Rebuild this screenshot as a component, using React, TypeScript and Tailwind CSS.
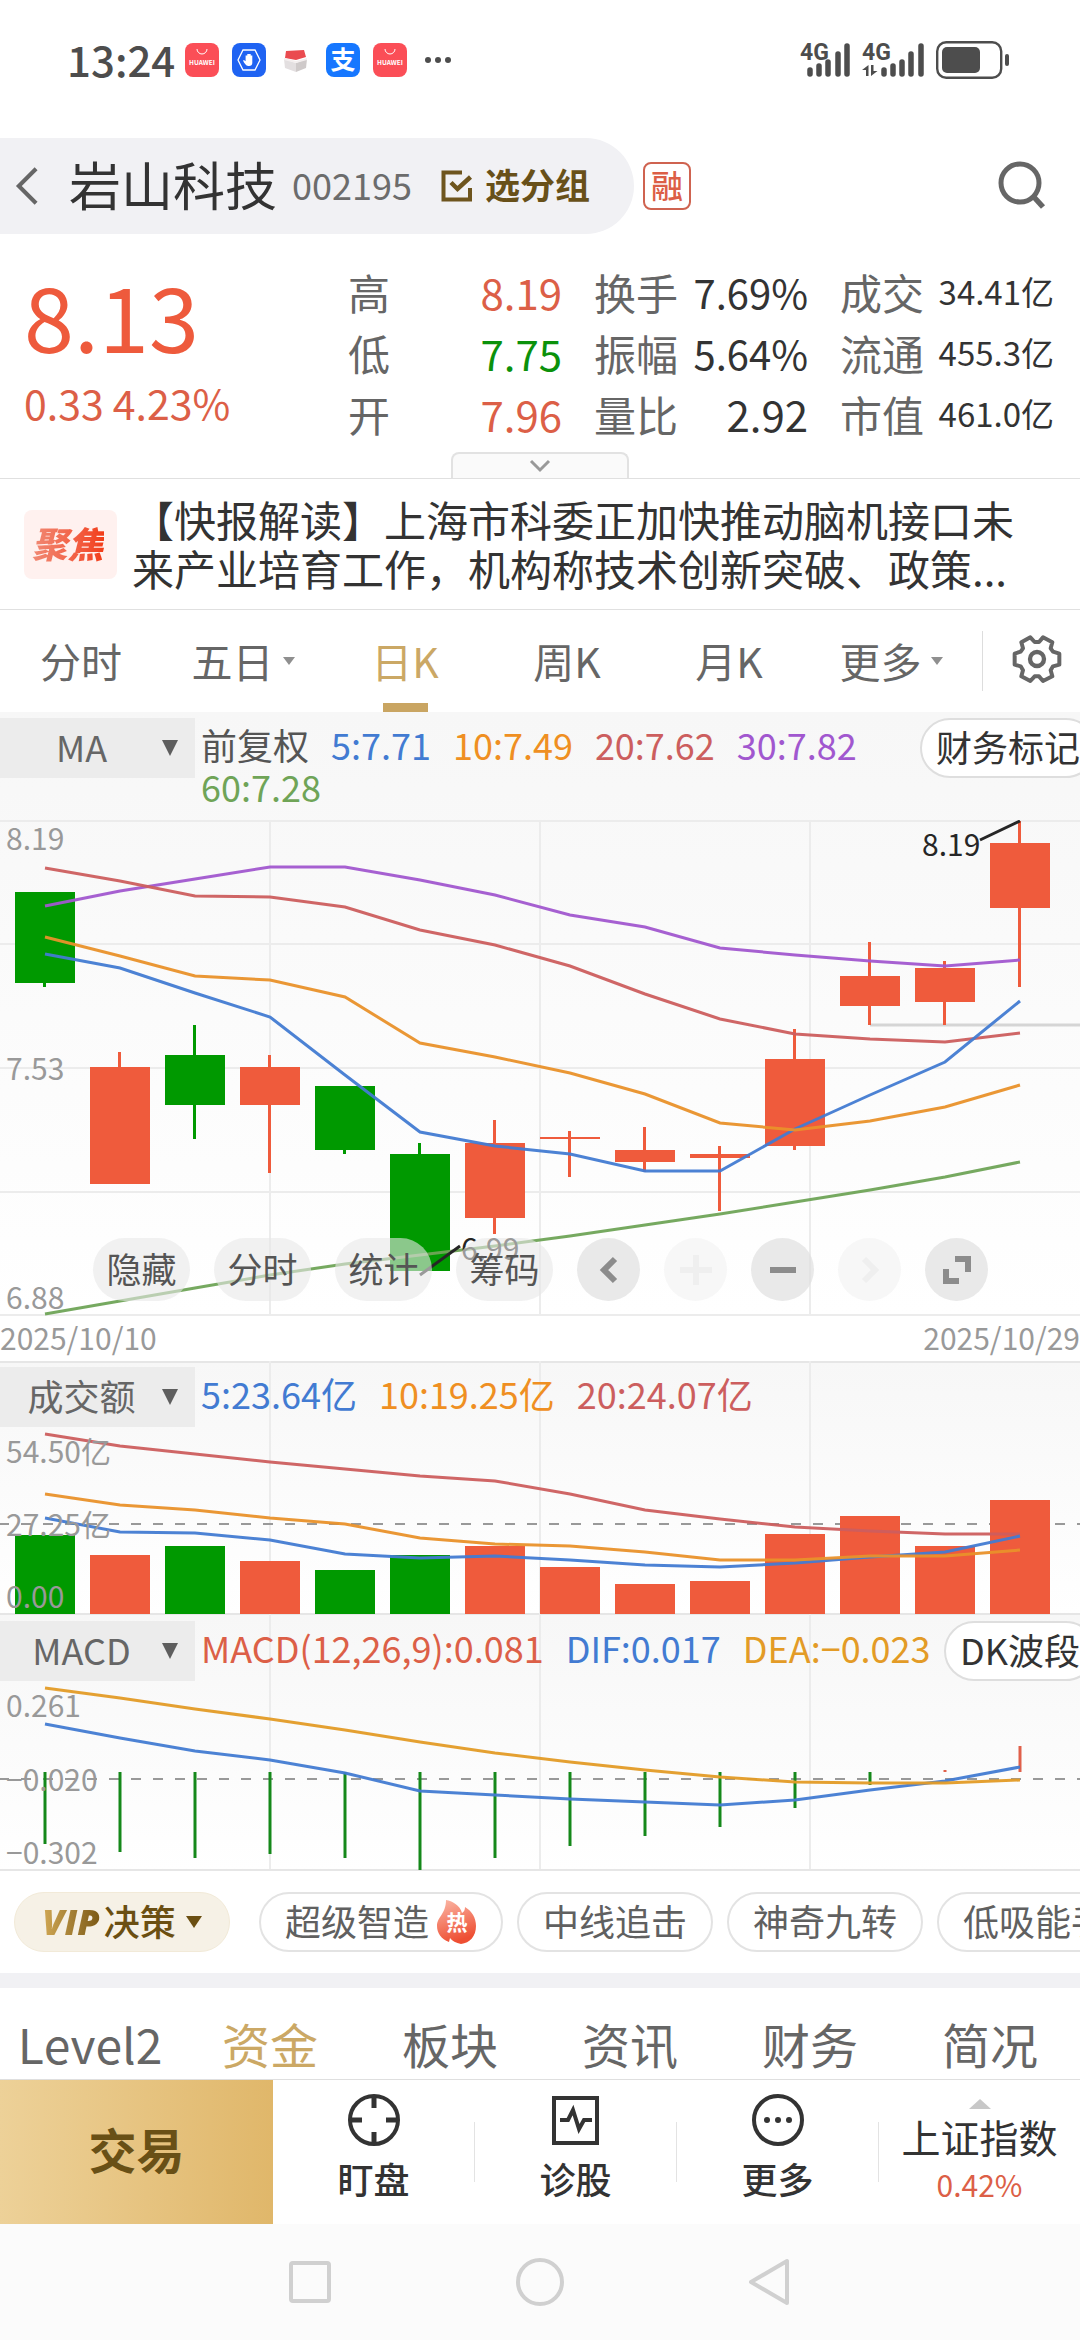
import { ReactNode } from "react";

const RED = "#ef5b3c";
const GREEN = "#009900";

const stats = [
  { label: "高", value: "8.19", style: "text-[#dc5f47] text-[42px]" },
  { label: "换手", value: "7.69%", style: "text-[#333333] text-[40px]" },
  { label: "成交", value: "34.41亿", style: "text-[#333333] text-[33px]" },
  { label: "低", value: "7.75", style: "text-[#0b910b] text-[42px]" },
  { label: "振幅", value: "5.64%", style: "text-[#333333] text-[40px]" },
  { label: "流通", value: "455.3亿", style: "text-[#333333] text-[33px]" },
  { label: "开", value: "7.96", style: "text-[#dc5f47] text-[42px]" },
  { label: "量比", value: "2.92", style: "text-[#333333] text-[42px]" },
  { label: "市值", value: "461.0亿", style: "text-[#333333] text-[33px]" },
];

// high, body top, body bottom, low, up
const candles: [number, number, number, number, boolean][] = [
  [72, 72, 163, 167, false],
  [232, 247, 364, 364, true],
  [205, 235, 285, 319, false],
  [235, 247, 285, 353, true],
  [266, 266, 330, 334, false],
  [323, 334, 451, 451, false],
  [300, 323, 398, 414, true],
  [311, 317, 319, 357, true],
  [307, 330, 342, 352, true],
  [326, 334, 338, 391, true],
  [209, 239, 326, 330, true],
  [122, 156, 186, 205, true],
  [141, 148, 182, 205, true],
  [1, 23, 88, 167, true],
];

const priceLines = [
  { color: "#6fa457", points: [494, 481, 468, 455, 444, 435, 426, 416, 405, 394, 382, 370, 357, 342] },
  { color: "#a157cf", points: [86, 71, 59, 47, 47, 60, 75, 95, 107, 128, 135, 141, 146, 140] },
  { color: "#cc5e5e", points: [48, 61, 76, 77, 87, 110, 125, 146, 174, 199, 214, 219, 222, 213] },
  { color: "#427bd2", points: [134, 148, 173, 197, 255, 312, 326, 334, 351, 351, 309, 275, 242, 181] },
  { color: "#e9912a", points: [117, 136, 156, 160, 177, 223, 237, 253, 274, 303, 310, 301, 287, 265] },
];

const volumes = [174, 194, 185, 200, 209, 194, 185, 206, 223, 220, 173, 155, 185, 139];

const volumeLines = [
  { color: "#cc5e5e", points: [73, 85, 93, 101, 108, 115, 120, 133, 149, 158, 166, 170, 173, 173] },
  { color: "#427bd2", points: [157, 171, 172, 179, 193, 197, 195, 199, 204, 206, 202, 196, 191, 175] },
  { color: "#e9912a", points: [133, 144, 149, 157, 163, 177, 183, 185, 191, 199, 199, 195, 195, 189] },
];

const macdBars = [229, 237, 243, 239, 243, 255, 243, 231, 221, 212, 193, 170, 155, 131];

const macdLines = [
  { color: "#427bd2", points: [109, 123, 136, 145, 158, 176, 180, 184, 187, 190, 185, 175, 166, 152] },
  { color: "#e39b26", points: [73, 83, 94, 104, 115, 127, 138, 147, 155, 162, 167, 168, 168, 165] },
];

const xAt = (i: number) => 45 + i * 75;

function Lines({ lines }: { lines: { color: string; points: number[] }[] }) {
  return (
    <g fill="none" strokeWidth="3" strokeOpacity="0.95">
      {lines.map((l, n) => (
        <polyline key={n} stroke={l.color} points={l.points.map((y, i) => `${xAt(i)},${y}`).join(" ")} />
      ))}
    </g>
  );
}

function AxisLabels({ items }: { items: [string, number][] }) {
  return (
    <g fill="#999999" fontSize="30">
      {items.map(([text, y]) => (
        <text key={text} x="6" y={y}>{text}</text>
      ))}
    </g>
  );
}

function Columns({ height }: { height: number }) {
  return <path d={`M270 0V${height}M540 0V${height}M810 0V${height}`} stroke="#ececec" strokeWidth="2" />;
}

function PriceChart() {
  return (
    <svg viewBox="0 0 1080 496" className="w-full [grid-area:1/1]">
      <path d="M0 1H1080M0 124H1080M0 248H1080M0 372H1080M0 495H1080" stroke="#ececec" strokeWidth="2" />
      <Columns height={496} />
      <path d="M870 205H1080" stroke="#d5d5d5" strokeWidth="3" />
      {candles.map(([high, top, bottom, low, up], i) => (
        <g key={i} fill={up ? RED : GREEN}>
          <rect x={xAt(i) - 2} y={high} width="3" height={low - high} />
          <rect x={xAt(i) - 30} y={top} width="60" height={bottom - top} />
        </g>
      ))}
      <Lines lines={priceLines} />
      <AxisLabels items={[["8.19", 30], ["7.53", 260], ["6.88", 489]]} />
      <path d="M980 20L1020 1M420 455L460 426" stroke="#262626" strokeWidth="3" />
      <g fill="#262626" fontSize="30">
        <text x="922" y="36">8.19</text>
        <text x="461" y="440">6.99</text>
      </g>
    </svg>
  );
}

function VolumeChart() {
  return (
    <svg viewBox="0 0 1080 254" className="w-full [grid-area:1/1]">
      <path d="M0 1H1080M0 253H1080" stroke="#e6e6e6" strokeWidth="2" />
      <Columns height={254} />
      <path d="M-1 163H1080" stroke="#999999" strokeWidth="2" strokeDasharray="10 12" />
      {volumes.map((y, i) => (
        <rect key={i} x={xAt(i) - 30} y={y} width="60" height={253 - y} fill={candles[i][4] ? RED : GREEN} />
      ))}
      <Lines lines={volumeLines} />
      <AxisLabels items={[["54.50亿", 102], ["27.25亿", 175], ["0.00", 247]]} />
    </svg>
  );
}

function MacdChart() {
  return (
    <svg viewBox="0 0 1080 256" className="w-full [grid-area:1/1]">
      <Columns height={256} />
      <path d="M0 255H1080" stroke="#e6e6e6" strokeWidth="2" />
      <path d="M-1 164H1080" stroke="#999999" strokeWidth="2" strokeDasharray="10 12" />
      {macdBars.map((y, i) => (
        <path key={i} d={`M${xAt(i)} 157V${y}`} stroke={y < 157 ? "#e0604a" : "#15881a"} strokeWidth="3" />
      ))}
      <Lines lines={macdLines} />
      <AxisLabels items={[["0.261", 102], ["−0.020", 176], ["−0.302", 249]]} />
    </svg>
  );
}

function IndicatorSelect({ label, options }: { label: string; options: string[] }) {
  return (
    <div className="relative w-[195px] shrink-0">
      <select aria-label={label} className="w-full h-[60px] pr-8 pb-1 appearance-none bg-[#ececec] text-center text-[#666666]">
        {options.map((o) => (
          <option key={o}>{o}</option>
        ))}
      </select>
      <svg viewBox="0 0 16 16" className="absolute right-[17px] top-[22px] w-4 h-4 pointer-events-none">
        <path d="M0 0H16L8 16Z" fill="#5e5e5e" />
      </svg>
    </div>
  );
}

function IndicatorBar({ select, children, action }: { select: ReactNode; children: ReactNode; action?: string }) {
  return (
    <div className="flex items-start pt-[6px] text-4xl z-10 [grid-area:1/1] self-start">
      {select}
      <div className="flex flex-wrap flex-1 gap-x-[22px] ml-[6px] pt-[5px] leading-[42px] whitespace-nowrap">{children}</div>
      {action && (
        <button className="shrink-0 h-[60px] px-[14px] pb-1 -mr-4 bg-white border-2 border-[#dedede] rounded-full text-[#333333] leading-none">
          {action}
        </button>
      )}
    </div>
  );
}

function HuaweiIcon() {
  return (
    <svg viewBox="0 0 34 34" className="w-[34px] h-[34px]">
      <rect width="34" height="34" rx="8" fill="#fb4e57" />
      <path d="M12 6a5 5 0 0 0 10 0" fill="none" stroke="#fff" strokeWidth="1" />
      <text x="17" y="22" textAnchor="middle" fontSize="6.5" fontWeight="700" fill="#fff">HUAWEI</text>
    </svg>
  );
}

function StatusBar() {
  return (
    <div className="flex items-center justify-between h-[120px] pl-[67px] pr-[70px] text-[#4d4d4d]">
      <div className="flex items-center">
        <span className="pb-[2px] text-[42px] leading-[44px] font-medium">13:24</span>
        <div className="flex items-center gap-[13px] ml-[10px]">
          <HuaweiIcon />
          <svg viewBox="0 0 34 34" className="w-[34px] h-[34px]">
            <rect width="34" height="34" rx="8" fill="#1f63f2" />
            <path d="M11 7H23L28 17L23 27H11L6 17Z" fill="none" stroke="#fff" strokeWidth="1.3" />
            <path d="M14 22C12.500 20.500 11.500 19 11 17.500c.8-.6 1.800-.2 2.600.8V12.500h1.700V16v-5h1.700v5-5h1.700v5-3.500h1.600V20c0 2-1.300 3-3.200 3-1.300 0-2.300-.2-3.100-1Z" fill="#fff" />
          </svg>
          <svg viewBox="0 0 34 34" className="w-[34px] h-[34px]">
            <path d="M5 16L17 20V29L6 25Z" fill="#e3dfe0" />
            <path d="M28 16L17 20V29L27 25Z" fill="#cfcaca" />
            <path d="M7 8L25 7L27 14L17 17L6 15Z" fill="#ea4b4f" />
            <path d="M5 15L17 18L28 15L28 17L17 20L5 17Z" fill="#f3eeee" />
          </svg>
          <svg viewBox="0 0 34 34" className="w-[34px] h-[34px] overflow-visible">
            <rect width="34" height="34" rx="8" fill="#1677ff" />
            <text x="17" y="26" textAnchor="middle" fontSize="25" fontWeight="700" fill="#fff">支</text>
          </svg>
          <HuaweiIcon />
        </div>
        <svg viewBox="0 0 28 8" className="w-7 h-2 ml-[17px]" fill="#4d4d4d">
          <circle cx="4" cy="4" r="3" />
          <circle cx="14" cy="4" r="3" />
          <circle cx="24" cy="4" r="3" />
        </svg>
      </div>
      <svg viewBox="0 0 210 38" className="w-[210px] h-[38px] overflow-visible" fill="#4d4d4d">
        <g fontSize="23" fontWeight="700" fontFamily="Roboto">
          <text x="0" y="19">4G</text>
          <text x="62" y="19">4G</text>
        </g>
        <path d="M10 29V33M19 25V33M28 21V33M38 13V33M47 5V33M84 29V33M93 25V33M102 21V33M111 13V33M121 5V33" stroke="#4d4d4d" strokeWidth="5.500" strokeLinecap="round" />
        <path d="M66 24V35H68.500V24L62 29H66ZM71 24V35L77.500 30H73.500V24Z" />
        <rect x="137.200" y="1.200" width="64" height="35.500" rx="9" fill="none" stroke="#4d4d4d" strokeWidth="2.400" />
        <rect x="142" y="6" width="38" height="26" rx="5" />
        <rect x="205" y="13" width="4" height="12" rx="2" />
      </svg>
    </div>
  );
}

function Header() {
  return (
    <header className="flex items-center pt-[18px] pr-[34px]">
      <div className="flex items-center w-[634px] h-24 pl-[14px] bg-[#f1f1f4] rounded-r-full">
        <button aria-label="返回">
          <svg viewBox="0 0 26 44" className="w-[26px] h-10">
            <path d="M23 3L4 22L23 41" fill="none" stroke="#666" strokeWidth="4.500" />
          </svg>
        </button>
        <h1 className="ml-[29px] pb-1 text-[52px] leading-[64px] text-[#333333]">岩山科技</h1>
        <span className="ml-[15px] pb-1 text-4xl text-[#6c6c6c]">002195</span>
        <button className="flex items-center gap-3 ml-[29px] text-[35px] leading-[48px] font-bold text-[#685019]">
          <svg viewBox="0 0 32 32" className="w-8 h-8" fill="none" stroke="#6e551e" strokeWidth="4">
            <path d="M21 2.500H2.500V29.500H29V18" />
            <path d="M10 12.500L16.500 19L29.500 7" strokeWidth="4.500" />
          </svg>
          <span className="pb-1">选分组</span>
        </button>
      </div>
      <span className="flex items-center justify-center w-12 h-12 ml-[9px] pb-1 border-2 border-[#cf6350] rounded-lg text-[32px] leading-none font-medium text-[#dc5f47]">融</span>
      <button aria-label="搜索" className="ml-auto">
        <svg viewBox="0 0 50 50" className="w-[50px] h-[50px]" fill="none" stroke="#666" strokeWidth="5">
          <circle cx="24" cy="22" r="19" />
          <path d="M37 35L47 46" strokeWidth="5.500" />
        </svg>
      </button>
    </header>
  );
}

function Quote() {
  return (
    <section className="pt-[27px] border-b border-[#e0e0e0]">
      <div className="flex pr-[26px]">
        <div className="w-[348px] pl-6 pt-[7px]">
          <p className="text-[90px] leading-[92px] text-[#ee5a3c]">8.13</p>
          <p className="text-[41px] leading-[84px] text-[#dc5f47]">0.33 4.23%</p>
        </div>
        <dl className="grid grid-cols-3 flex-1 gap-x-8">
          {stats.map((s) => (
            <div key={s.label} className="flex items-center justify-between h-[61px] whitespace-nowrap">
              <dt className="text-[42px] text-[#666666]">{s.label}</dt>
              <dd className={s.style}>{s.value}</dd>
            </div>
          ))}
        </dl>
      </div>
      <button aria-label="展开" className="flex items-center justify-center w-[178px] h-[26px] mt-2 mx-auto bg-[#fafafa] border-2 border-b-0 border-[#e2e2e2] rounded-t-lg">
        <svg viewBox="0 0 22 14" className="w-[22px] h-[14px]">
          <path d="M2 2L11 11L20 2" fill="none" stroke="#999" strokeWidth="3" />
        </svg>
      </button>
    </section>
  );
}

function News() {
  return (
    <a href="#news" className="flex items-center h-[131px] pl-6 pr-8 border-b border-[#e0e0e0]">
      <span className="flex items-center justify-center w-[93px] h-[69px] pr-[6px] pb-1 bg-[#fff1ef] rounded-lg shrink-0">
        <span className="text-4xl font-black italic bg-linear-to-r from-[#f08a75] to-[#f23c16] bg-clip-text text-transparent">聚焦</span>
      </span>
      <p className="ml-[15px] pb-[2px] text-[42px] leading-[49px] text-[#333333]">
        【快报解读】上海市科委正加快推动脑机接口未来产业培育工作，机构称技术创新突破、政策...
      </p>
    </a>
  );
}

function SmallCaret() {
  return (
    <svg viewBox="0 0 12 8" className="w-3 h-2 ml-[9px]">
      <path d="M0 0H12L6 8Z" fill="#8f8f8f" />
    </svg>
  );
}

function PeriodTabs() {
  const tabs = [
    { name: "分时" },
    { name: "五日", more: true },
    { name: "日K", active: true },
    { name: "周K" },
    { name: "月K" },
    { name: "更多", more: true },
  ];
  return (
    <nav className="flex items-center h-[102px]">
      <div className="grid grid-cols-6 flex-1 h-full">
        {tabs.map((t) => (
          <button
            key={t.name}
            className={
              t.active
                ? "relative flex items-center justify-center text-[41px] text-[#cba865]"
                : "relative flex items-center justify-center text-[41px] text-[#666666]"
            }
          >
            {t.name}
            {t.more && <SmallCaret />}
            {t.active && <span className="absolute bottom-0 w-[45px] h-[9px] bg-[#c9a562]" />}
          </button>
        ))}
      </div>
      <div className="w-[1px] h-[60px] mx-[10px] bg-[#dddddd]" />
      <button aria-label="设置" className="pl-[19px] pr-[18px] pb-1">
        <svg viewBox="65 55 150 150" className="w-[50px] h-[50px]" fill="none" stroke="#666" strokeWidth="12" strokeLinejoin="round">
          <path d="M120 65L133 79H146L158 65L186 80L181 98L188 108L207 114V147L188 152L181 164L186 182L158 196L146 182H133L120 196L93 182L98 164L91 152L73 147V114L91 108L98 98L93 80Z" />
          <circle cx="140" cy="130" r="21" strokeWidth="13" />
        </svg>
      </button>
    </nav>
  );
}

function ChartTools() {
  const circle = "flex items-center justify-center w-[63px] h-[63px] rounded-full bg-[#e0e0e0]/70";
  const faded = "flex items-center justify-center w-[63px] h-[63px] rounded-full bg-[#f2f2f2]/60";
  return (
    <div className="flex gap-6 pl-[93px] mb-[15px] z-10 [grid-area:1/1] self-end">
      {["隐藏", "分时", "统计", "筹码"].map((t) => (
        <button key={t} className="w-[97px] h-[63px] pb-1 rounded-full bg-[#e8e8e8]/60 text-[35px] leading-none text-[#555555]">
          {t}
        </button>
      ))}
      <button aria-label="左移" className={circle}>
        <svg viewBox="0 0 32 32" className="w-8 h-8">
          <path d="M22 5L11 16L22 27" fill="none" stroke="#8c8c8c" strokeWidth="6" />
        </svg>
      </button>
      <button aria-label="放大" disabled className={faded}>
        <svg viewBox="0 0 32 32" className="w-8 h-8">
          <path d="M0 16H32M16 1V31" stroke="#efefef" strokeWidth="6" />
        </svg>
      </button>
      <button aria-label="缩小" className={circle}>
        <svg viewBox="0 0 32 32" className="w-8 h-8">
          <path d="M3 16H29" stroke="#8c8c8c" strokeWidth="6" />
        </svg>
      </button>
      <button aria-label="右移" disabled className={faded}>
        <svg viewBox="0 0 32 32" className="w-8 h-8">
          <path d="M10 5L21 16L10 27" fill="none" stroke="#efefef" strokeWidth="6" />
        </svg>
      </button>
      <button aria-label="全屏" className={circle}>
        <svg viewBox="0 0 32 32" className="w-8 h-8">
          <path d="M14 5H27V18M5 15V27H18" fill="none" stroke="#8c8c8c" strokeWidth="6" />
        </svg>
      </button>
    </div>
  );
}

function Charts() {
  return (
    <main>
      <section className="bg-linear-to-b from-[#f7f7f7] to-white overflow-hidden">
        <div className="h-[108px]">
          <IndicatorBar select={<IndicatorSelect label="主图指标" options={["MA", "BOLL"]} />} action="财务标记">
            <span className="text-[#555555]">前复权</span>
            <span className="text-[#427bd2]">5:7.71</span>
            <span className="text-[#ef8f22]">10:7.49</span>
            <span className="text-[#cc5e5e]">20:7.62</span>
            <span className="text-[#a157cf]">30:7.82</span>
            <span className="text-[#6fa457]">60:7.28</span>
          </IndicatorBar>
        </div>
        <div className="grid">
          <PriceChart />
          <ChartTools />
        </div>
      </section>
      <div className="flex justify-between h-[45px] text-[30px] leading-[42px] text-[#999999]">
        <span>2025/10/10</span>
        <span>2025/10/29</span>
      </div>
      <section className="grid bg-linear-to-b from-[#f7f7f7] to-white overflow-hidden">
        <VolumeChart />
        <IndicatorBar select={<IndicatorSelect label="副图指标一" options={["成交额", "成交量"]} />}>
          <span className="text-[#427bd2]">5:23.64亿</span>
          <span className="text-[#ef8f22]">10:19.25亿</span>
          <span className="text-[#cc5e5e]">20:24.07亿</span>
        </IndicatorBar>
      </section>
      <section className="grid bg-linear-to-b from-[#f7f7f7] to-white overflow-hidden">
        <MacdChart />
        <IndicatorBar select={<IndicatorSelect label="副图指标二" options={["MACD", "KDJ"]} />} action="DK波段">
          <span className="text-[#dc5f47]">MACD(12,26,9):0.081</span>
          <span className="text-[#427bd2]">DIF:0.017</span>
          <span className="text-[#e39b26]">DEA:−0.023</span>
        </IndicatorBar>
      </section>
    </main>
  );
}

function StrategyRow() {
  const pill = "flex items-center gap-2 shrink-0 h-[60px] px-6 border-2 border-[#e3e3e3] rounded-full text-4xl leading-none";
  return (
    <div className="flex items-center gap-[14px] h-[102px] pl-[14px] text-[#606060] whitespace-nowrap overflow-hidden">
      <button className="flex items-center justify-center shrink-0 w-[216px] h-[60px] mr-[15px] rounded-full bg-[#f6f1e6] border border-[#f2ead8] text-4xl leading-none font-medium text-[#6b4f12]">
        <span className="pr-1 font-['Open_Sans'] font-extrabold italic bg-linear-to-r from-[#d2a955] to-[#765510] bg-clip-text text-transparent">VIP</span>
        <span className="pb-1">决策</span>
        <svg viewBox="0 0 16 12" className="w-4 h-3 ml-[10px]">
          <path d="M0 0H16L8 12Z" fill="#6b4f12" />
        </svg>
      </button>
      <button className={pill}>
        <span className="pb-1">超级智造</span>
        <svg viewBox="0 0 40 44" className="w-10 h-11">
          <defs>
            <linearGradient id="flame" x1="0" y1="0" x2="0.3" y2="1">
              <stop offset="0" stopColor="#fbb9a8" />
              <stop offset="1" stopColor="#ee4f33" />
            </linearGradient>
          </defs>
          <path d="M9 0C15 1 23 5 25 13C27 12 28 10 28 7C35 11 39 18 39 26C39 36 33 43 24 44C19 43 15 41 13 38L12 42C4 39 0 33 0 26C0 17 9 14 9 0Z" fill="url(#flame)" />
          <text x="20" y="30" textAnchor="middle" fontSize="21" fontWeight="700" fill="#fff">热</text>
        </svg>
      </button>
      <button className={pill}><span className="pb-1">中线追击</span></button>
      <button className={pill}><span className="pb-1">神奇九转</span></button>
      <button className={pill}><span className="pb-1">低吸能手</span></button>
    </div>
  );
}

function InfoTabs() {
  return (
    <nav className="grid grid-cols-6 h-[92px] pt-[30px] pb-3 border-b border-[#dfdfdf] text-5xl leading-[48px] text-[#666666]">
      <button>Level2</button>
      <button className="text-[#cba865]">资金</button>
      <button>板块</button>
      <button>资讯</button>
      <button>财务</button>
      <button>简况</button>
    </nav>
  );
}

function ActionItem({ label, children }: { label: string; children: ReactNode }) {
  return (
    <button className="flex flex-col flex-1 items-center pt-3 text-4xl leading-[48px] font-medium">
      <svg viewBox="0 0 56 56" className="w-14 h-14 mb-[6px]" fill="none" stroke="#333" strokeWidth="4">
        {children}
      </svg>
      {label}
    </button>
  );
}

function Divider() {
  return <div className="self-center w-[1px] h-[60px] bg-[#e3e3e3]" />;
}

function ActionBar() {
  return (
    <div className="flex h-36 bg-white text-[#333333]">
      <button className="w-[273px] pb-2 bg-linear-to-r from-[#edd198] to-[#e0b76a] text-5xl font-bold text-[#695016]">交易</button>
      <ActionItem label="盯盘">
        <circle cx="28" cy="28" r="24" />
        <path d="M28 4V16M28 40V52M4 28H16M40 28H52" strokeWidth="5" />
      </ActionItem>
      <Divider />
      <ActionItem label="诊股">
        <rect x="6" y="6" width="43" height="45" />
        <path d="M12 28H20L25 18L31 37L36 28H44" />
      </ActionItem>
      <Divider />
      <ActionItem label="更多">
        <circle cx="28" cy="28" r="24" />
        <g fill="#333" stroke="none">
          <circle cx="17" cy="28" r="3" />
          <circle cx="28" cy="28" r="3" />
          <circle cx="39" cy="28" r="3" />
        </g>
      </ActionItem>
      <Divider />
      <button className="flex flex-col flex-1 items-center pt-[19px]">
        <svg viewBox="0 0 22 10" className="w-[22px] h-[10px]">
          <path d="M0 10H22L11 0Z" fill="#c8c8c8" />
        </svg>
        <span className="mt-[2px] text-[39px] leading-[50px]">上证指数</span>
        <span className="text-[30px] leading-[46px] text-[#dc5f47]">0.42%</span>
      </button>
    </div>
  );
}

function SystemNav() {
  return (
    <div className="flex justify-center gap-[182px] py-[34px] bg-[#fbfbfb]">
      <button aria-label="最近任务">
        <svg viewBox="0 0 48 48" className="w-12 h-12" fill="none" stroke="#d0d0d0" strokeWidth="4">
          <rect x="5" y="5" width="38" height="38" rx="2" />
        </svg>
      </button>
      <button aria-label="主页">
        <svg viewBox="0 0 48 48" className="w-12 h-12" fill="none" stroke="#d0d0d0" strokeWidth="4">
          <circle cx="24" cy="24" r="22" />
        </svg>
      </button>
      <button aria-label="后退">
        <svg viewBox="0 0 48 48" className="w-12 h-12" fill="none" stroke="#d0d0d0" strokeWidth="4" strokeLinejoin="round">
          <path d="M41 3V45L5 24Z" />
        </svg>
      </button>
    </div>
  );
}

export default function App() {
  return (
    <div className="flex flex-col min-h-screen bg-white overflow-hidden font-['Noto_Sans_CJK_SC','Noto_Sans',sans-serif]">
      <StatusBar />
      <Header />
      <Quote />
      <News />
      <PeriodTabs />
      <Charts />
      <StrategyRow />
      <div className="h-[15px] bg-[#f1f1f4]" />
      <InfoTabs />
      <ActionBar />
      <SystemNav />
    </div>
  );
}
